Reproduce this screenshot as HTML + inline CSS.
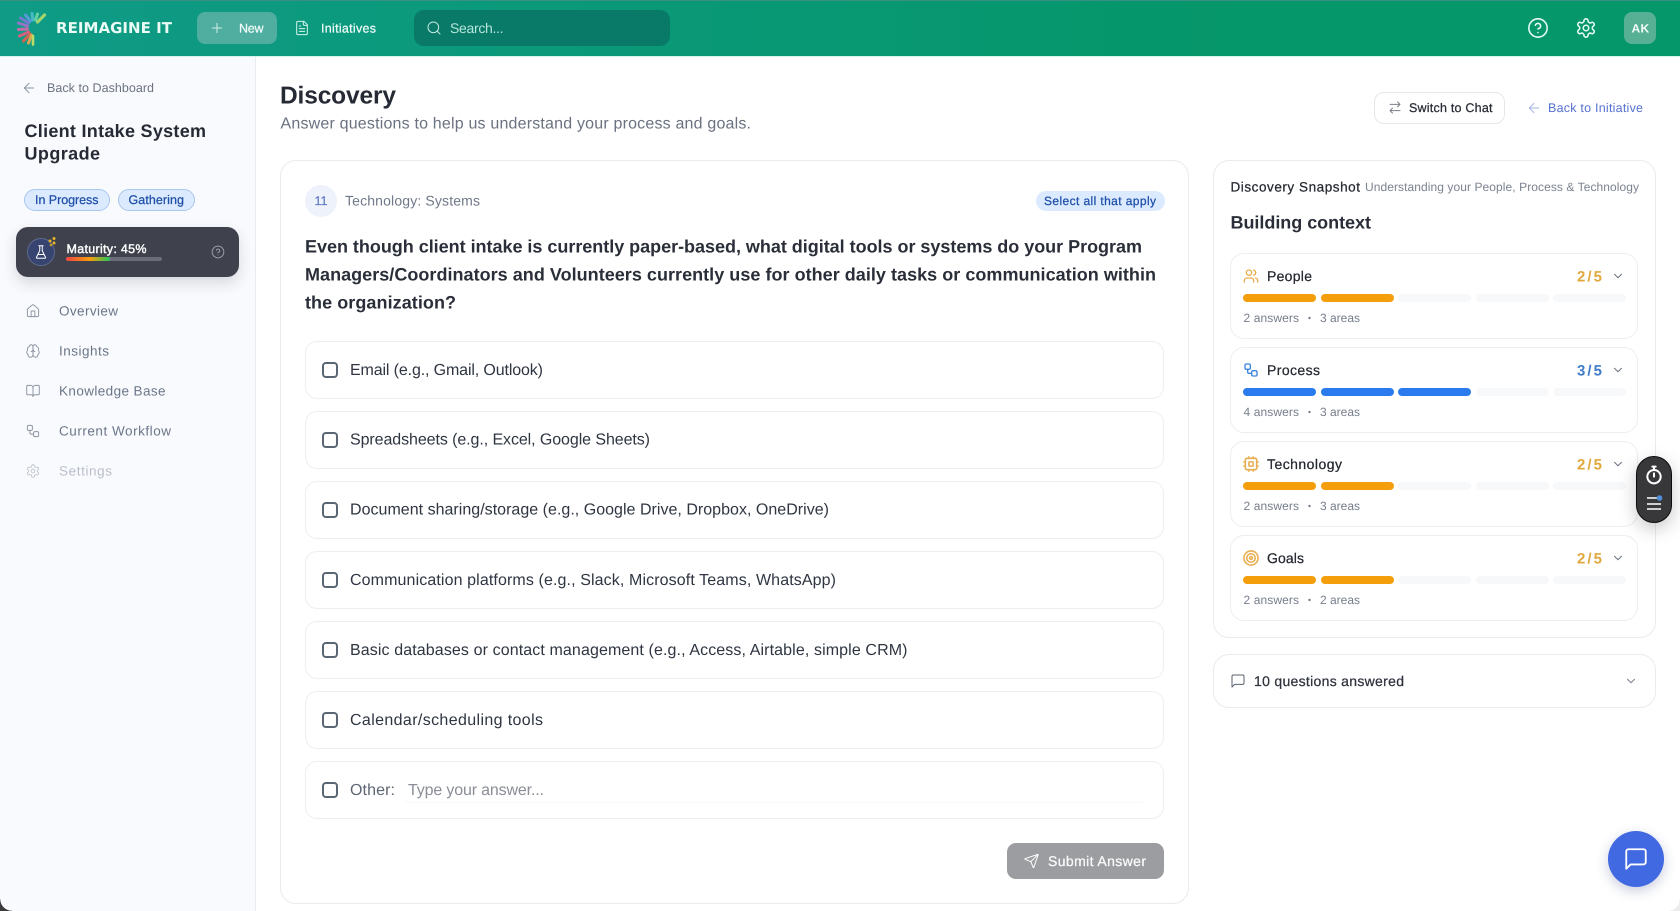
<!DOCTYPE html>
<html lang="en"><head><meta charset="utf-8"><title>Discovery</title>
<style>
html,body{margin:0;padding:0;width:1680px;height:911px;overflow:hidden;background:#fff;font-family:"Liberation Sans",sans-serif}
.b{position:absolute;box-sizing:border-box}
svg.o{position:absolute;left:0;top:0;width:1680px;height:911px}
svg text{font-family:"Liberation Sans",sans-serif;text-rendering:geometricPrecision;white-space:pre}
.m{stroke-width:.25px;paint-order:stroke}
.s{font-weight:700}
.i{fill:none;stroke-linecap:round;stroke-linejoin:round;stroke-width:2}
.card{background:#fff;border:1px solid #e9ebee;border-radius:16px}
.opt{left:305px;width:859px;height:58px;background:#fff;border:1px solid #eceef1;border-radius:12px}
.cb{left:322px;width:16px;height:16px;border:2px solid #5b6675;border-radius:4px;background:#fff}
.sub{left:1230px;width:408px;height:86px;background:#fff;border:1px solid #eceef1;border-radius:14px}
.seg{height:8px;width:73.4px;border-radius:4px;background:#f7f8fa}
.or{background:#f59e0b}.bl{background:#2b7aee}
</style></head><body>
<div class="b" style="left:0;top:0;width:1680px;height:57px;background:linear-gradient(90deg,#0f9b86,#059669 75%);border-top:1px solid #3a8f82;border-bottom:1px solid #d5f3ea"></div>
<div class="b" style="left:197px;top:12px;width:80px;height:32px;border-radius:8px;background:#4fae9f"></div>
<div class="b" style="left:414px;top:10px;width:256px;height:36px;border-radius:10px;background:#097a68"></div>
<div class="b" style="left:1624px;top:12px;width:32px;height:32px;border-radius:8px;background:#58b094"></div>

<div class="b" style="left:0;top:57px;width:256px;height:854px;background:#f9fafd;border-right:1px solid #e9ebf0"></div>
<div class="b" style="left:24px;top:189px;width:86px;height:22px;border-radius:11px;background:#dbeafe;border:1px solid #a9c8ee"></div>
<div class="b" style="left:118px;top:189px;width:77px;height:22px;border-radius:11px;background:#dbeafe;border:1px solid #a9c8ee"></div>
<div class="b" style="left:16px;top:227px;width:223px;height:50px;border-radius:12px;background:#3f424c;box-shadow:0 6px 14px rgba(30,40,60,.16)"></div>
<div class="b" style="left:27px;top:238px;width:28px;height:28px;border-radius:50%;background:#374470;border:1px solid #5f6a90"></div>
<div class="b" style="left:66px;top:257px;width:96px;height:4px;border-radius:2px;background:#6b6e78"></div>
<div class="b" style="left:66px;top:257px;width:44px;height:4px;border-radius:2px;background:linear-gradient(90deg,#ef4444,#f59e0b 55%,#22c55e)"></div>

<div class="b card" style="left:280px;top:160px;width:909px;height:744px"></div>
<div class="b" style="left:305px;top:185px;width:32px;height:32px;border-radius:50%;background:#eef2fb"></div>
<div class="b" style="left:1036px;top:191px;width:129px;height:20px;border-radius:10px;background:#dbeafe"></div>

<div class="b opt" style="top:341px"></div><div class="b cb" style="top:362px"></div>
<div class="b opt" style="top:411px"></div><div class="b cb" style="top:432px"></div>
<div class="b opt" style="top:481px"></div><div class="b cb" style="top:502px"></div>
<div class="b opt" style="top:551px"></div><div class="b cb" style="top:572px"></div>
<div class="b opt" style="top:621px"></div><div class="b cb" style="top:642px"></div>
<div class="b opt" style="top:691px"></div><div class="b cb" style="top:712px"></div>
<div class="b opt" style="top:761px"></div><div class="b cb" style="top:782px"></div>
<div class="b" style="left:402px;top:770px;width:745px;height:33px;border-bottom:1px solid #f7f8f9;border-radius:8px"></div>

<div class="b" style="left:1007px;top:843px;width:157px;height:36px;border-radius:9px;background:#9c9da1"></div>
<div class="b" style="left:1374px;top:92px;width:131px;height:32px;border-radius:10px;background:#fff;border:1px solid #e5e7eb"></div>

<div class="b card" style="left:1213px;top:160px;width:443px;height:478px"></div>
<div class="b sub" style="top:253px"></div>
<div class="b sub" style="top:347px"></div>
<div class="b sub" style="top:441px"></div>
<div class="b sub" style="top:535px"></div>
<div class="b seg or" style="left:1243px;top:294px"></div><div class="b seg or" style="left:1320.6px;top:294px"></div><div class="b seg" style="left:1398px;top:294px"></div><div class="b seg" style="left:1475.6px;top:294px"></div><div class="b seg" style="left:1553px;top:294px"></div>
<div class="b seg bl" style="left:1243px;top:388px"></div><div class="b seg bl" style="left:1320.6px;top:388px"></div><div class="b seg bl" style="left:1398px;top:388px"></div><div class="b seg" style="left:1475.6px;top:388px"></div><div class="b seg" style="left:1553px;top:388px"></div>
<div class="b seg or" style="left:1243px;top:482px"></div><div class="b seg or" style="left:1320.6px;top:482px"></div><div class="b seg" style="left:1398px;top:482px"></div><div class="b seg" style="left:1475.6px;top:482px"></div><div class="b seg" style="left:1553px;top:482px"></div>
<div class="b seg or" style="left:1243px;top:576px"></div><div class="b seg or" style="left:1320.6px;top:576px"></div><div class="b seg" style="left:1398px;top:576px"></div><div class="b seg" style="left:1475.6px;top:576px"></div><div class="b seg" style="left:1553px;top:576px"></div>
<div class="b card" style="left:1213px;top:654px;width:443px;height:54px"></div>

<div class="b" style="left:1636px;top:456px;width:36px;height:67px;border-radius:18px;background:#38383b;border:1.5px solid #0c0c0e;box-shadow:0 6px 18px rgba(0,0,0,.22)"></div>
<div class="b" style="left:1608px;top:831px;width:56px;height:56px;border-radius:50%;background:#4169e1;box-shadow:0 4px 12px rgba(40,60,120,.25)"></div>
<div class="b" style="left:0;top:899px;width:12px;height:12px;background:radial-gradient(circle at 100% 0,transparent 11.5px,#3a3a3a 12px)"></div>
<div class="b" style="left:1668px;top:899px;width:12px;height:12px;background:radial-gradient(circle at 0 0,transparent 11.5px,#ececec 12px)"></div>

<svg class="o" viewBox="0 0 1680 911" xmlns="http://www.w3.org/2000/svg">
<defs>
<symbol id="arrow" viewBox="0 0 24 24"><path d="m12 19-7-7 7-7M19 12H5"/></symbol>
<symbol id="plus" viewBox="0 0 24 24"><path d="M5 12h14M12 5v14"/></symbol>
<symbol id="file" viewBox="0 0 24 24"><path d="M15 2H6a2 2 0 0 0-2 2v16a2 2 0 0 0 2 2h12a2 2 0 0 0 2-2V7Z"/><path d="M14 2v4a2 2 0 0 0 2 2h4M16 13H8M16 17H8M10 9H8"/></symbol>
<symbol id="search" viewBox="0 0 24 24"><circle cx="11" cy="11" r="8"/><path d="m21 21-4.3-4.3"/></symbol>
<symbol id="help" viewBox="0 0 24 24"><circle cx="12" cy="12" r="10"/><path d="M9.09 9a3 3 0 0 1 5.83 1c0 2-3 3-3 3M12 17h.01"/></symbol>
<symbol id="gear" viewBox="0 0 24 24"><path d="M12.22 2h-.44a2 2 0 0 0-2 2v.18a2 2 0 0 1-1 1.73l-.43.25a2 2 0 0 1-2 0l-.15-.08a2 2 0 0 0-2.73.73l-.22.38a2 2 0 0 0 .73 2.73l.15.1a2 2 0 0 1 1 1.72v.51a2 2 0 0 1-1 1.74l-.15.09a2 2 0 0 0-.73 2.73l.22.38a2 2 0 0 0 2.73.73l.15-.08a2 2 0 0 1 2 0l.43.25a2 2 0 0 1 1 1.73V20a2 2 0 0 0 2 2h.44a2 2 0 0 0 2-2v-.18a2 2 0 0 1 1-1.73l.43-.25a2 2 0 0 1 2 0l.15.08a2 2 0 0 0 2.73-.73l.22-.39a2 2 0 0 0-.73-2.73l-.15-.08a2 2 0 0 1-1-1.74v-.5a2 2 0 0 1 1-1.74l.15-.09a2 2 0 0 0 .73-2.73l-.22-.38a2 2 0 0 0-2.73-.73l-.15.08a2 2 0 0 1-2 0l-.43-.25a2 2 0 0 1-1-1.73V4a2 2 0 0 0-2-2z"/><circle cx="12" cy="12" r="3"/></symbol>
<symbol id="house" viewBox="0 0 24 24"><path d="M15 21v-8a1 1 0 0 0-1-1h-4a1 1 0 0 0-1 1v8"/><path d="M3 10a2 2 0 0 1 .709-1.528l7-5.999a2 2 0 0 1 2.582 0l7 5.999A2 2 0 0 1 21 10v9a2 2 0 0 1-2 2H5a2 2 0 0 1-2-2z"/></symbol>
<symbol id="brain" viewBox="0 0 24 24"><path d="M12 5a3 3 0 1 0-5.997.125 4 4 0 0 0-2.526 5.77 4 4 0 0 0 .556 6.588A4 4 0 1 0 12 18Z"/><path d="M12 5a3 3 0 1 1 5.997.125 4 4 0 0 1 2.526 5.77 4 4 0 0 1-.556 6.588A4 4 0 1 1 12 18Z"/><path d="M15 13a4.5 4.5 0 0 1-3-4 4.5 4.5 0 0 1-3 4"/></symbol>
<symbol id="book" viewBox="0 0 24 24"><path d="M12 7v14"/><path d="M3 18a1 1 0 0 1-1-1V4a1 1 0 0 1 1-1h5a4 4 0 0 1 4 4 4 4 0 0 1 4-4h5a1 1 0 0 1 1 1v13a1 1 0 0 1-1 1h-6a3 3 0 0 0-3 3 3 3 0 0 0-3-3z"/></symbol>
<symbol id="flow" viewBox="0 0 24 24"><rect x="3" y="3" width="8" height="8" rx="2"/><path d="M7 11v4a2 2 0 0 0 2 2h4"/><rect x="13" y="13" width="8" height="8" rx="2"/></symbol>
<symbol id="users" viewBox="0 0 24 24"><path d="M16 21v-2a4 4 0 0 0-4-4H6a4 4 0 0 0-4 4v2"/><circle cx="9" cy="7" r="4"/><path d="M22 21v-2a4 4 0 0 0-3-3.87M16 3.13a4 4 0 0 1 0 7.75"/></symbol>
<symbol id="cpu" viewBox="0 0 24 24"><rect x="4" y="4" width="16" height="16" rx="2"/><rect x="9" y="9" width="6" height="6" rx="1"/><path d="M15 2v2M15 20v2M2 15h2M2 9h2M20 15h2M20 9h2M9 2v2M9 20v2"/></symbol>
<symbol id="target" viewBox="0 0 24 24"><circle cx="12" cy="12" r="10"/><circle cx="12" cy="12" r="6"/><circle cx="12" cy="12" r="2"/></symbol>
<symbol id="msg" viewBox="0 0 24 24"><path d="M21 15a2 2 0 0 1-2 2H7l-4 4V5a2 2 0 0 1 2-2h14a2 2 0 0 1 2 2z"/></symbol>
<symbol id="send" viewBox="0 0 24 24"><path d="M14.536 21.686a.5.5 0 0 0 .937-.024l6.5-19a.496.496 0 0 0-.635-.635l-19 6.5a.5.5 0 0 0-.024.937l7.93 3.18a2 2 0 0 1 1.112 1.11z"/><path d="m21.854 2.147-10.94 10.939"/></symbol>
<symbol id="flask" viewBox="0 0 24 24"><path d="M10 2v7.527a2 2 0 0 1-.211.896L4.72 20.55a1 1 0 0 0 .9 1.45h12.76a1 1 0 0 0 .9-1.45l-5.069-10.127A2 2 0 0 1 14 9.527V2M8.5 2h7M7 16h10"/></symbol>
<symbol id="timer" viewBox="0 0 24 24"><path d="M10 2h4M12 2v4M12 14V10"/><circle cx="12" cy="14" r="8"/></symbol>
<symbol id="chev" viewBox="0 0 24 24"><path d="m6 9 6 6 6-6"/></symbol>
<symbol id="swap" viewBox="0 0 24 24"><path d="m16 3 4 4-4 4M20 7H4M8 21l-4-4 4-4M4 17h16"/></symbol>
</defs>

<!-- logo -->
<g fill="none" stroke-linecap="round" stroke-width="3.2" transform="translate(-1.500 0)" opacity=".9">
<path d="M39 22 46 15" stroke="#b5dc6f"/><path d="M37 20 39 14" stroke="#6fd7a6" stroke-width="3"/><path d="M34.500 20 33.500 13.500" stroke="#4fc0cc" stroke-width="3"/><path d="M32 21 27 15" stroke="#5d9ce0" stroke-width="3"/><path d="M30 23 22 18" stroke="#7d78da" stroke-width="3"/><path d="M29 26 20 23" stroke="#a86fd0" stroke-width="3"/><path d="M29 29 20 29.500" stroke="#d667ac" stroke-width="3"/><path d="M30 32 21 36" stroke="#ea5a80" stroke-width="3"/><path d="M31.500 34 25 41" stroke="#ea5f4f" stroke-width="3"/><path d="M33 35 30 43" stroke="#f0a84a" stroke-width="3"/><path d="M34.500 36 34.500 44.500" stroke="#cfe266" stroke-width="2.600"/>
</g>
<text x="56" y="33" font-size="15" font-weight="700" fill="#eafaf5" textLength="116" style="font-family:'DejaVu Sans','Liberation Sans',sans-serif">REIMAGINE IT</text>
<use href="#plus" class="i" x="209" y="20" width="16" height="16" stroke="#cfeee6" style="stroke-width:1.5"/>
<text x="239" y="32.500" font-size="12.500" fill="#f0fbf8" class="m" stroke="#f0fbf8" textLength="24.500">New</text>
<use href="#file" class="i" x="294" y="20" width="16" height="16" stroke="#d6f3eb" style="stroke-width:1.500"/>
<text x="321" y="32.500" font-size="12.500" fill="#f0fbf8" class="m" stroke="#f0fbf8" textLength="55">Initiatives</text>
<use href="#search" class="i" x="426" y="20" width="16" height="16" stroke="#c5ebe2" style="stroke-width:1.500"/>
<text x="450" y="33" font-size="14" fill="#b5e5da" textLength="53.500">Search...</text>
<use href="#help" class="i" x="1527" y="17" width="22" height="22" stroke="#e6faf4" style="stroke-width:1.700"/>
<use href="#gear" class="i" x="1575" y="17" width="22" height="22" stroke="#e6faf4" style="stroke-width:1.700"/>
<text x="1631.500" y="32.500" font-size="12" font-weight="700" fill="#f4fdfa" style="letter-spacing:.3px">AK</text>

<!-- sidebar -->
<use href="#arrow" class="i" x="21" y="80" width="16" height="16" stroke="#8a93a3" style="stroke-width:1.500"/>
<text x="47" y="92" font-size="12.500" fill="#6b7280" textLength="107">Back to Dashboard</text>
<text x="24.500" y="137" font-size="18" class="s" fill="#262a35" textLength="181.500">Client Intake System</text>
<text x="24.500" y="159.500" font-size="18" class="s" fill="#262a35" textLength="75.500">Upgrade</text>
<text x="35" y="204" font-size="12.500" fill="#1e4fa8" class="m" stroke="#1e4fa8" textLength="63.500">In Progress</text>
<text x="128.500" y="204" font-size="12.500" fill="#1e4fa8" class="m" stroke="#1e4fa8" textLength="55.500">Gathering</text>
<use href="#flask" class="i" x="33.500" y="244.500" width="15" height="15" stroke="#fff" style="stroke-width:1.600"/>
<circle cx="50" cy="241" r="1.500" fill="#e8b52a"/><circle cx="54" cy="238.500" r="1.500" fill="#e8b52a"/><circle cx="54" cy="243" r="1.500" fill="#e8b52a"/><circle cx="51" cy="245" r="1.300" fill="#caa02a"/>
<text x="66.500" y="253" font-size="12.500" fill="#fff" stroke="#fff" style="stroke-width:.4px;paint-order:stroke" textLength="80">Maturity: 45%</text>
<use href="#help" class="i" x="211" y="245" width="14" height="14" stroke="#9a9da6" style="stroke-width:1.700"/>
<g fill="#6b7689" font-size="13.500">
<text x="59" y="315.500" textLength="59">Overview</text>
<text x="59" y="355.500" textLength="50">Insights</text>
<text x="59" y="395.500" textLength="106.500">Knowledge Base</text>
<text x="59" y="435.500" textLength="112">Current Workflow</text>
<text x="59" y="475.500" textLength="53" fill="#b9bfc9">Settings</text>
</g>
<use href="#house" class="i" x="25.500" y="303.500" width="15" height="15" stroke="#8b93a1" style="stroke-width:1.500"/>
<use href="#brain" class="i" x="25.500" y="343.500" width="15" height="15" stroke="#8b93a1" style="stroke-width:1.500"/>
<use href="#book" class="i" x="25.500" y="383.500" width="15" height="15" stroke="#8b93a1" style="stroke-width:1.500"/>
<use href="#flow" class="i" x="25.500" y="423.500" width="15" height="15" stroke="#8b93a1" style="stroke-width:1.500"/>
<use href="#gear" class="i" x="25.500" y="463.500" width="15" height="15" stroke="#c3c8d0" style="stroke-width:1.500"/>

<!-- header of main -->
<text x="280" y="103.500" font-size="24.500" class="s" fill="#262a34" textLength="116">Discovery</text>
<text x="280.500" y="128.500" font-size="16" fill="#6b7280" textLength="470.500">Answer questions to help us understand your process and goals.</text>
<use href="#swap" class="i" x="1387.500" y="100" width="15" height="15" stroke="#7c7f86" style="stroke-width:1.500"/>
<text x="1409" y="112" font-size="12.500" fill="#262a33" class="m" stroke="#262a33" textLength="83.500">Switch to Chat</text>
<use href="#arrow" class="i" x="1526" y="100" width="16" height="16" stroke="#a4b3e6" style="stroke-width:1.500"/>
<text x="1548" y="112" font-size="12.500" fill="#5471cf" textLength="95">Back to Initiative</text>

<!-- question -->
<text x="321" y="205" font-size="12.500" fill="#5f7ac7" text-anchor="middle" class="m" stroke="#5f7ac7">11</text>
<text x="345" y="205.500" font-size="14" fill="#6f7888" textLength="135">Technology: Systems</text>
<text x="1044" y="205" font-size="12" fill="#1e4fa8" class="m" stroke="#1e4fa8" textLength="112">Select all that apply</text>
<g font-size="18" class="s" fill="#2a2e38">
<text x="305" y="252.500" textLength="837">Even though client intake is currently paper-based, what digital tools or systems do your Program</text>
<text x="305" y="280.500" textLength="851">Managers/Coordinators and Volunteers currently use for other daily tasks or communication within</text>
<text x="305" y="308.500" textLength="151">the organization?</text>
</g>
<g font-size="16" fill="#2f3642">
<text x="350" y="375" textLength="193">Email (e.g., Gmail, Outlook)</text>
<text x="350" y="444.500" textLength="300">Spreadsheets (e.g., Excel, Google Sheets)</text>
<text x="350" y="514.500" textLength="479">Document sharing/storage (e.g., Google Drive, Dropbox, OneDrive)</text>
<text x="350" y="585" textLength="486">Communication platforms (e.g., Slack, Microsoft Teams, WhatsApp)</text>
<text x="350" y="655" textLength="557.500">Basic databases or contact management (e.g., Access, Airtable, simple CRM)</text>
<text x="350" y="725" textLength="193">Calendar/scheduling tools</text>
<text x="350" y="795" textLength="45" fill="#5f6673">Other:</text>
<text x="408" y="795" textLength="136" fill="#8a8e96">Type your answer...</text>
</g>
<use href="#send" class="i" x="1023.500" y="853" width="16" height="16" stroke="#fff" style="stroke-width:1.500"/>
<text x="1048" y="866" font-size="14" fill="#fbfbfb" class="m" stroke="#fbfbfb" textLength="98">Submit Answer</text>

<!-- snapshot -->
<text x="1230.500" y="191.500" font-size="13.500" fill="#23272f" class="m" stroke="#23272f" textLength="129.500">Discovery Snapshot</text>
<text x="1365" y="191" font-size="12" fill="#7b8290" textLength="274">Understanding your People, Process &amp; Technology</text>
<text x="1230.500" y="228.500" font-size="18" class="s" fill="#2a2e38" textLength="140.500">Building context</text>
<g font-size="14" fill="#23272f" class="m" stroke="#23272f">
<text x="1267" y="281" textLength="45">People</text>
<text x="1267" y="375" textLength="53">Process</text>
<text x="1267" y="469" textLength="75">Technology</text>
<text x="1267" y="563" textLength="37">Goals</text>
</g>
<g font-size="15" class="s">
<text x="1577" y="281.500" fill="#e0a83d" textLength="25">2/5</text>
<text x="1577" y="375.500" fill="#3f7cc9" textLength="25">3/5</text>
<text x="1577" y="469.500" fill="#e0a83d" textLength="25">2/5</text>
<text x="1577" y="563.500" fill="#e0a83d" textLength="25">2/5</text>
</g>
<use href="#users" class="i" x="1243" y="268" width="16" height="16" stroke="#e9ad4e" style="stroke-width:2"/>
<use href="#flow" class="i" x="1243" y="362" width="16" height="16" stroke="#3f84e0" style="stroke-width:2"/>
<use href="#cpu" class="i" x="1242.500" y="455.500" width="17" height="17" stroke="#e9ad4e" style="stroke-width:2.200"/>
<use href="#target" class="i" x="1242.500" y="549.500" width="17" height="17" stroke="#e9ad4e" style="stroke-width:2.200"/>
<use href="#chev" class="i" x="1611" y="269" width="14" height="14" stroke="#6b7280" style="stroke-width:1.800"/>
<use href="#chev" class="i" x="1611" y="363" width="14" height="14" stroke="#6b7280" style="stroke-width:1.800"/>
<use href="#chev" class="i" x="1611" y="457" width="14" height="14" stroke="#6b7280" style="stroke-width:1.800"/>
<use href="#chev" class="i" x="1611" y="551" width="14" height="14" stroke="#6b7280" style="stroke-width:1.800"/>
<g font-size="12" fill="#767d8b">
<text x="1243.500" y="322" textLength="55.500">2 answers</text><text x="1320" y="322" textLength="40">3 areas</text><circle cx="1309.500" cy="318" r="1.200"/>
<text x="1243.500" y="416" textLength="55.500">4 answers</text><text x="1320" y="416" textLength="40">3 areas</text><circle cx="1309.500" cy="412" r="1.200"/>
<text x="1243.500" y="510" textLength="55.500">2 answers</text><text x="1320" y="510" textLength="40">3 areas</text><circle cx="1309.500" cy="506" r="1.200"/>
<text x="1243.500" y="604" textLength="55.500">2 answers</text><text x="1320" y="604" textLength="40">2 areas</text><circle cx="1309.500" cy="600" r="1.200"/>
</g>
<use href="#msg" class="i" x="1230" y="673" width="16" height="16" stroke="#58606e" style="stroke-width:1.500"/>
<text x="1254" y="686" font-size="14" fill="#2d323c" class="m" stroke="#2d323c" textLength="150">10 questions answered</text>
<use href="#chev" class="i" x="1624" y="674" width="14" height="14" stroke="#7b8290" style="stroke-width:1.800"/>

<!-- floating -->
<use href="#timer" class="i" x="1644" y="465" width="20" height="20" stroke="#fff" style="stroke-width:2.400"/>
<path d="M1647 498h11M1647 504h14M1647 509h14" stroke="#fff" stroke-width="1.500" fill="none"/>
<circle cx="1659.500" cy="498" r="2.800" fill="#4f8fd8"/>
<use href="#msg" class="i" x="1623" y="846" width="26" height="26" stroke="#fff" style="stroke-width:1.700"/>
</svg>
</body></html>
